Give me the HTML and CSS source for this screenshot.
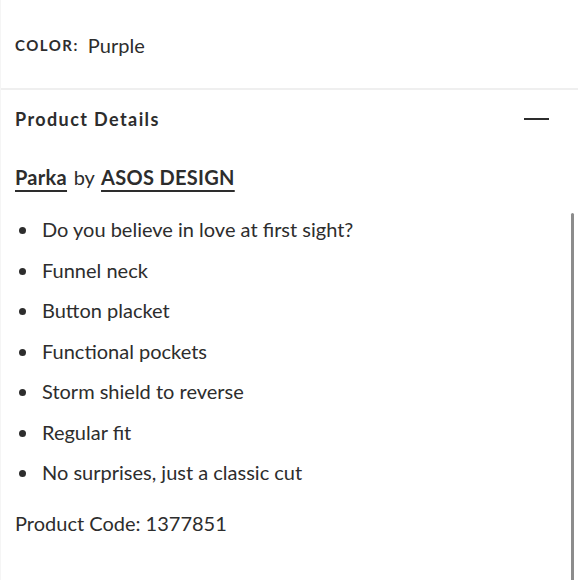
FILE: index.html
```html
<!DOCTYPE html>
<html lang="en">
<head>
<meta charset="utf-8">
<title>Product Details</title>
<link rel="stylesheet" href="styles.css">
</head>
<body>
<div class="page">
  <div class="color-row">
    <span class="color-label">COLOR:</span>
    <span class="color-value">Purple</span>
  </div>
  <section class="details">
    <div class="details-header">
      <h2 class="details-title">Product Details</h2>
      <span class="collapse-icon"></span>
    </div>
    <p class="brand-line"><a class="link" href="#">Parka</a> by <a class="link" href="#">ASOS DESIGN</a></p>
    <ul class="features">
      <li>Do you believe in love at first sight?</li>
      <li>Funnel neck</li>
      <li>Button placket</li>
      <li>Functional pockets</li>
      <li>Storm shield to reverse</li>
      <li>Regular fit</li>
      <li>No surprises, just a classic cut</li>
    </ul>
    <p class="product-code">Product Code: 1377851</p>
  </section>
  <div class="scrollbar"></div>
</div>
</body>
</html>
```
FILE: styles.css
```css
html, body {
  margin: 0;
  padding: 0;
  background: #fff;
}
body {
  font-family: Lato, "Noto Sans", sans-serif;
  color: #2d2d2d;
}
.page {
  position: relative;
  width: 580px;
  height: 580px;
  overflow: hidden;
  border-left: 1px solid #f5f5f5;
  box-sizing: border-box;
}
.color-row {
  height: 90px;
  display: flex;
  align-items: center;
  padding-left: 14px;
  padding-top: 2px;
  box-sizing: border-box;
  border-bottom: 2px solid #efefef;
  margin-right: 2px;
}
.color-label {
  font-weight: 700;
  font-size: 15px;
  letter-spacing: 1.5px;
  margin-right: 9px;
}
.color-value {
  font-size: 20px;
}
.details {
  padding-left: 14px;
}
.details-header {
  height: 58px;
  display: flex;
  align-items: center;
  justify-content: space-between;
  padding-right: 31px;
}
.details-title {
  margin: 0;
  font-size: 18px;
  font-weight: 700;
  letter-spacing: 1.4px;
}
.collapse-icon {
  width: 25px;
  height: 2px;
  background: #2d2d2d;
}
.brand-line {
  margin: 13px 0 0;
  font-size: 20px;
  line-height: 32px;
  word-spacing: 1.5px;
}
.link {
  color: #2d2d2d;
  font-weight: 700;
  letter-spacing: 0.3px;
  word-spacing: 0;
  text-decoration: underline;
  text-decoration-thickness: 2px;
  text-underline-offset: 5px;
}
.features {
  list-style: none;
  margin: 16px 0 0;
  padding: 0;
}
.features li {
  position: relative;
  padding-left: 27px;
  font-size: 20px;
  line-height: 40.5px;
}
.features li::before {
  content: "";
  position: absolute;
  left: 4px;
  top: 18px;
  width: 7px;
  height: 7px;
  border-radius: 50%;
  background: #2d2d2d;
}
.product-code {
  margin: 14px 0 0;
  font-size: 20px;
  line-height: 32px;
}
.scrollbar {
  position: absolute;
  right: 6px;
  top: 213px;
  bottom: 0;
  width: 3px;
  border-radius: 2px 2px 0 0;
  background: #8c8c8c;
}
```
